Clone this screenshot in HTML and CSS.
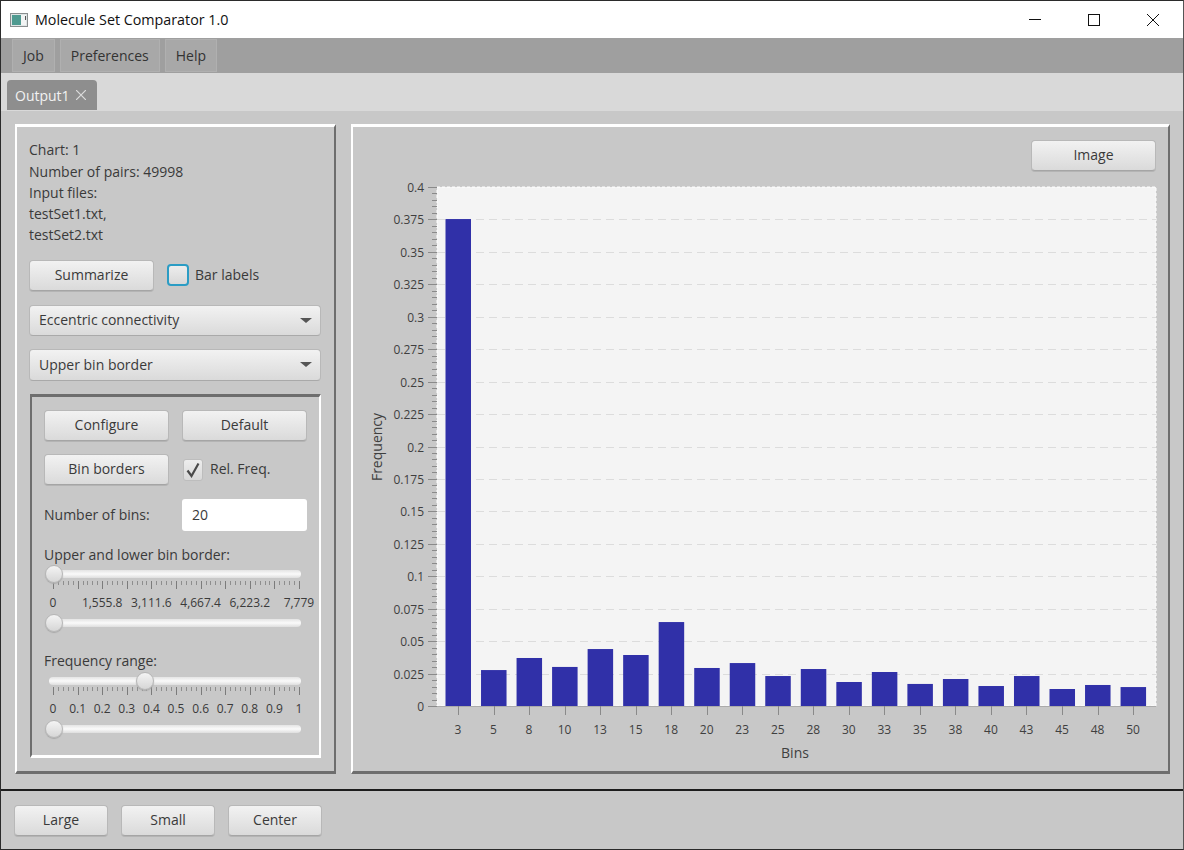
FILE: index.html
```html
<!DOCTYPE html>
<html lang="en">
<head>
<meta charset="UTF-8">
<title>Molecule Set Comparator 1.0</title>
<link rel="stylesheet" href="styles.css">
</head>
<body>

<div class="window">
  <div class="titlebar">
    <svg class="app-icon" width="18" height="14" viewBox="0 0 18 14">
      <rect x="0.5" y="0.5" width="17" height="13" fill="#dfe5e5" stroke="#8a8e8f"/>
      <rect x="2" y="2" width="9" height="10" fill="#4f9a90"/>
      <rect x="11" y="2" width="5" height="10" fill="#f2f4f4"/>
      <rect x="15" y="3" width="1" height="4" fill="#555"/>
    </svg>
    <span class="title">Molecule Set Comparator 1.0</span>
    <div class="win-controls">
      <svg width="12" height="12" viewBox="0 0 12 12"><path d="M0 5.5H12" stroke="#111"/></svg>
      <svg width="12" height="12" viewBox="0 0 12 12"><rect x="0.5" y="0.5" width="11" height="11" fill="none" stroke="#111"/></svg>
      <svg width="12" height="12" viewBox="0 0 12 12"><path d="M0 0L12 12M12 0L0 12" stroke="#111"/></svg>
    </div>
  </div>

  <div class="menubar">
    <div class="menu-item">Job</div>
    <div class="menu-item">Preferences</div>
    <div class="menu-item">Help</div>
  </div>

  <div class="tabstrip">
    <div class="tab">
      Output1
      <svg width="10" height="10" viewBox="0 0 10 10"><path d="M0 0L10 10M10 0L0 10" stroke="#dcdcdc" stroke-width="1.2"/></svg>
    </div>
  </div>

  <div class="content">
    <div class="panel side">
      <div class="info">
        <div>Chart: 1</div>
        <div>Number of pairs: 49998</div>
        <div>Input files:</div>
        <div>testSet1.txt,</div>
        <div>testSet2.txt</div>
      </div>

      <div class="row summarize-row">
        <button class="btn btn-wide">Summarize</button>
        <span class="checkbox focused"></span>
        <span class="check-label">Bar labels</span>
      </div>

      <div class="select">Eccentric connectivity</div>
      <div class="select">Upper bin border</div>

      <div class="subpanel">
        <div class="form-grid">
          <button class="btn">Configure</button>
          <button class="btn">Default</button>
          <button class="btn">Bin borders</button>
          <div class="row rel-freq">
            <span class="checkbox">
              <svg width="16" height="16" viewBox="0 0 16 16"><path d="M2.5 8.5L6.5 14L13.5 1.5" fill="none" stroke="#4a4a4a" stroke-width="2.2"/></svg>
            </span>
            <span class="check-label">Rel. Freq.</span>
          </div>
          <div class="bins-label">Number of bins:</div>
          <div class="text-input">20</div>
        </div>

        <div class="slider-title first">Upper and lower bin border:</div>
        <div class="slider"><span class="thumb" style="left: -4px"></span></div>
        <div class="ticks"></div>
        <div class="tick-labels">
          <span>0</span><span>1,555.8</span><span>3,111.6</span><span>4,667.4</span><span>6,223.2</span><span>7,779</span>
        </div>
        <div class="slider"><span class="thumb" style="left: -4px"></span></div>

        <div class="slider-title second">Frequency range:</div>
        <div class="slider"><span class="thumb" style="left: 87px"></span></div>
        <div class="ticks tight"></div>
        <div class="tick-labels">
          <span>0</span><span>0.1</span><span>0.2</span><span>0.3</span><span>0.4</span><span>0.5</span><span>0.6</span><span>0.7</span><span>0.8</span><span>0.9</span><span>1</span>
        </div>
        <div class="slider"><span class="thumb" style="left: -4px"></span></div>
      </div>
    </div>

    <div class="panel chart-panel">
      <div class="chart-top">
        <button class="btn">Image</button>
      </div>
      <svg id="chart" class="chart" width="815" height="600" viewBox="353 171 815 600"></svg>
    </div>
  </div>

  <div class="bottombar">
    <button class="btn btn-bottom">Large</button>
    <button class="btn btn-bottom">Small</button>
    <button class="btn btn-bottom">Center</button>
  </div>
</div>

<script src="chart.js"></script>
</body>
</html>
```

FILE: styles.css
```css
* {
  box-sizing: border-box;
}
html, body {
  margin: 0;
  padding: 0;
}
body {
  width: 1184px;
  height: 850px;
  overflow: hidden;
  font-family: "Open Sans", "Noto Sans", sans-serif;
  font-size: 14px;
  color: #3a3a3a;
}
.window {
  width: 1184px;
  height: 850px;
  display: flex;
  flex-direction: column;
  border: 1px solid #2b2b2b;
  border-right-color: #555;
  background-color: #c8c8c8;
}

/* title bar */
.titlebar {
  height: 37px;
  flex: none;
  display: flex;
  align-items: center;
  background-color: #fff;
  padding-left: 9px;
}
.app-icon {
  margin-right: 7px;
}
.title {
  font-size: 14.3px;
  color: #111;
}
.win-controls {
  margin-left: auto;
  display: flex;
  gap: 47px;
  padding-right: 24px;
}

/* menu */
.menubar {
  height: 35px;
  flex: none;
  display: flex;
  gap: 5px;
  padding: 1px 0 1px 11px;
  background-color: #9f9f9f;
}
.menu-item {
  padding: 0 10px 1px;
  display: flex;
  align-items: center;
  background-color: #a8a8a8;
  border: 1px solid #b0b0b0;
  color: #333;
}

/* tabs */
.tabstrip {
  height: 38px;
  flex: none;
  padding: 7px 0 0 6px;
  background-color: #d9d9d9;
}
.tab {
  width: 90px;
  height: 30px;
  display: flex;
  align-items: center;
  gap: 6px;
  padding-left: 8px;
  background-color: #8e8e8e;
  border-radius: 4px 4px 0 0;
  color: #f2f2f2;
}

/* main area */
.content {
  flex: 1;
  display: flex;
  gap: 15px;
  padding: 13px 13px 15px 14px;
  border-bottom: 2px solid #1d1d1d;
}
.panel {
  border-style: solid;
  border-width: 3px 2px;
  border-color: #fff #6e6e6e #6e6e6e #fff;
}
.side {
  width: 321px;
  padding: 12px 13px 13px 12px;
}
.info {
  line-height: 21.3px;
  padding-top: 0.3px;
}
.row {
  display: flex;
  align-items: center;
}
.summarize-row {
  margin: 14.2px 0 14px;
}
.check-label {
  padding-bottom: 2px;
}
.select {
  height: 31.5px;
  margin-bottom: 13px;
  padding: 0 0 2px 9px;
  display: flex;
  align-items: center;
  position: relative;
  background: linear-gradient(#f2f2f2, #dadada);
  border: 1px solid #b8b8b8;
  border-bottom-color: #a9a9a9;
  border-radius: 4px;
}
.select::after {
  content: "";
  position: absolute;
  right: 8px;
  top: 12px;
  border-left: 6px solid transparent;
  border-right: 6px solid transparent;
  border-top: 5px solid #555;
}

/* buttons */
.btn {
  height: 31px;
  width: 125px;
  padding: 0 0 2px;
  font: inherit;
  color: #3a3a3a;
  background: linear-gradient(#f2f2f2, #dadada);
  border: 1px solid #b8b8b8;
  border-bottom-color: #a5a5a5;
  border-radius: 4px;
  box-shadow: 0 1px 0 #b4b4b4;
}
.btn-wide {
  margin-right: 13px;
}
.btn-bottom {
  width: 94px;
}
.checkbox {
  width: 20px;
  height: 22px;
  flex: none;
  margin-right: 7px;
  display: flex;
  align-items: center;
  justify-content: center;
  background: linear-gradient(#ededed, #d8d8d8);
  border: 1px solid #bdbdbd;
  border-radius: 3px;
}
.checkbox.focused {
  width: 22px;
  margin-right: 6px;
  border: 2px solid #2b9cc4;
  border-radius: 4px;
}

/* inner panel */
.subpanel {
  height: 364px;
  margin-left: 1px;
  padding: 13px 12px 0;
  border-style: solid;
  border-width: 3px 2px;
  border-color: #6e6e6e #fff #fff #6e6e6e;
}
.form-grid {
  display: grid;
  grid-template-columns: 125px 125px;
  grid-template-rows: 31px 31px 32px;
  column-gap: 13px;
  row-gap: 13.5px;
  align-items: center;
}
.rel-freq {
  padding-left: 1px;
}
.text-input {
  height: 32px;
  padding-left: 10px;
  display: flex;
  align-items: center;
  background-color: #fff;
  border-radius: 3px;
}

/* sliders */
.slider-title {
  line-height: 20px;
}
.slider-title.first {
  margin-top: 14px;
  margin-bottom: 5px;
}
.slider-title.second {
  margin-top: 24px;
  margin-bottom: 6px;
}
.slider {
  position: relative;
  width: 252px;
  height: 8px;
  margin-left: 5px;
  background: linear-gradient(#e4e4e4, #fafafa 50%, #dedede);
  border-radius: 4px;
}
.thumb {
  position: absolute;
  top: -5px;
  width: 18px;
  height: 18px;
  border-radius: 50%;
  background: linear-gradient(#f4f4f4, #d6d6d6);
  border: 1px solid #b6b6b6;
  box-shadow: 0 1px 1px #a8a8a8;
}
.ticks {
  width: 247px;
  height: 9px;
  margin: 3px 0 0 9px;
  background-image:
    repeating-linear-gradient(90deg, #7b7b7b 0, #7b7b7b 1px, transparent 1px, transparent 24.6px),
    repeating-linear-gradient(90deg, #8e8e8e 0, #8e8e8e 1px, transparent 1px, transparent 4.92px);
  background-size: 100% 8px, 100% 4px;
  background-repeat: no-repeat;
}
.ticks.tight {
  margin-top: 2px;
}
.tick-labels {
  width: 246px;
  height: 16px;
  margin: 5px 0 8px 9px;
  display: flex;
  justify-content: space-between;
  font-size: 12px;
  line-height: 16px;
}
.tick-labels span {
  width: 0;
  display: flex;
  justify-content: center;
  white-space: nowrap;
}

/* chart */
.chart-panel {
  flex: 1;
  display: flex;
  flex-direction: column;
}
.chart-top {
  height: 44px;
  flex: none;
  padding: 13px 12px 0 0;
  display: flex;
  justify-content: flex-end;
}
.chart {
  display: block;
  font-family: "Open Sans", "Noto Sans", sans-serif;
  font-size: 12px;
  fill: #3f3f3f;
}
.plot-bg {
  fill: #f4f4f4;
  stroke: #fff;
  stroke-dasharray: 3 2;
}
.grid {
  stroke: #dcdcdc;
  stroke-dasharray: 8 5;
}
.tick {
  stroke: #8a8a8a;
}
.axis {
  stroke: #ababab;
}
.bar {
  fill: #3030a8;
}
.axis-title {
  font-size: 14px;
}

/* bottom */
.bottombar {
  flex: none;
  height: 59px;
  padding: 14px 0 0 13px;
  display: flex;
  gap: 13px;
  align-items: flex-start;
}
```

FILE: chart.js
```js
var NS = "http://www.w3.org/2000/svg";
var chart = document.getElementById("chart");

var plot = { left: 437, right: 1156, top: 187, bottom: 706 };
var maxY = 0.4;
var stepY = 0.025;

var bins = [3, 5, 8, 10, 13, 15, 18, 20, 23, 25, 28, 30, 33, 35, 38, 40, 43, 45, 48, 50];
var freq = [0.3753, 0.0277, 0.037, 0.0301, 0.0439, 0.0393, 0.0647, 0.0293, 0.0331, 0.0231,
            0.0285, 0.0185, 0.0262, 0.017, 0.0208, 0.0154, 0.0231, 0.0131, 0.0162, 0.0146];

function add(tag, attrs, text) {
  var el = document.createElementNS(NS, tag);
  for (var k in attrs) {
    el.setAttribute(k, attrs[k]);
  }
  if (text !== undefined) {
    el.textContent = text;
  }
  chart.appendChild(el);
  return el;
}

function yPos(v) {
  return plot.bottom - (v / maxY) * (plot.bottom - plot.top);
}

add("rect", { class: "plot-bg", x: plot.left, y: plot.top, width: plot.right - plot.left, height: plot.bottom - plot.top });

// y axis: gridlines, major and minor ticks, labels
var steps = Math.round(maxY / stepY);
for (var i = 0; i <= steps; i++) {
  var y = Math.round(yPos(i * stepY)) + 0.5;
  if (i > 0 && i < steps) {
    add("line", { class: "grid", x1: plot.left, x2: plot.right, y1: y, y2: y });
  }
  add("line", { class: "tick", x1: plot.left - 9, x2: plot.left, y1: y, y2: y });
  add("text", { x: plot.left - 13, y: y + 4, "text-anchor": "end" }, +(i * stepY).toFixed(3));
  if (i < steps) {
    for (var m = 1; m < 5; m++) {
      var my = Math.round(yPos((i + m / 5) * stepY)) + 0.5;
      add("line", { class: "tick", x1: plot.left - 5, x2: plot.left, y1: my, y2: my });
    }
  }
}

// bars and x axis
add("line", { class: "axis", x1: plot.left, x2: plot.right, y1: plot.bottom + 0.5, y2: plot.bottom + 0.5 });
for (var b = 0; b < bins.length; b++) {
  var cx = 458 + b * 35.53;
  var barTop = yPos(freq[b]);
  add("rect", { class: "bar", x: cx - 12.5, y: barTop, width: 25.5, height: plot.bottom - barTop });
  add("line", { class: "tick", x1: Math.round(cx) + 0.5, x2: Math.round(cx) + 0.5, y1: plot.bottom, y2: plot.bottom + 9 });
  add("text", { x: cx, y: 734, "text-anchor": "middle" }, bins[b]);
}

add("text", { class: "axis-title", x: 795, y: 758, "text-anchor": "middle" }, "Bins");
add("text", { class: "axis-title", x: 382, y: 447, "text-anchor": "middle", transform: "rotate(-90 382 447)" }, "Frequency");
```
